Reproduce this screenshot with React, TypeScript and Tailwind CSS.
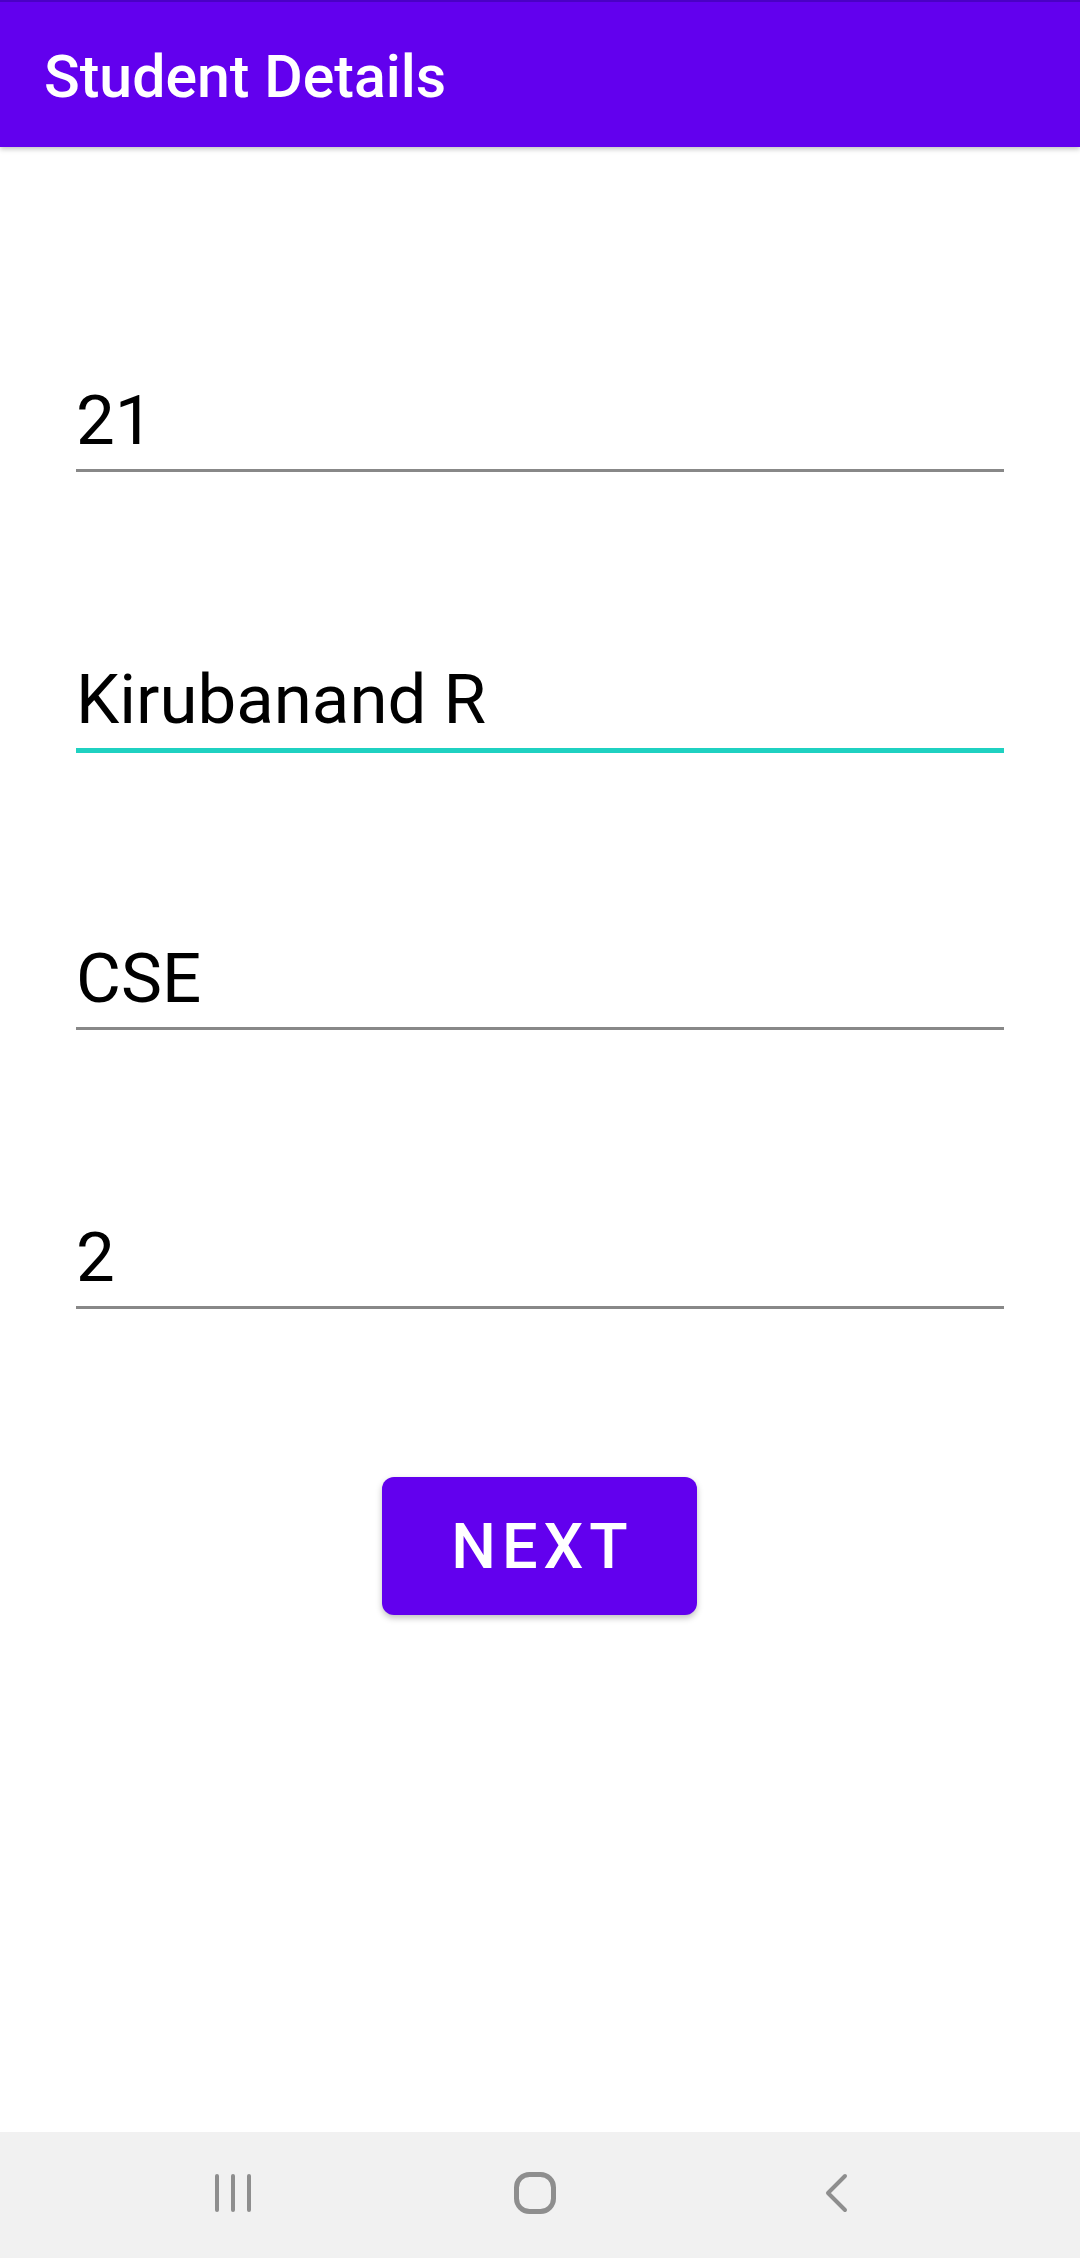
import React from "react";

const font = { fontFamily: "Roboto, 'Noto Sans', sans-serif" };

function Field({ value, active = false }: { value: string; active?: boolean }) {
  return (
    <div
      className={
        "pb-[7px] " +
        (active ? "border-b-[5px] border-[#1fd1c1]" : "border-b-[3px] border-[#888888]")
      }
    >
      <div className="text-[69px] leading-[82px] text-black">{value}</div>
    </div>
  );
}

export default function App() {
  return (
    <div className="flex h-[2258px] w-[1080px] flex-col bg-white" style={font}>
      <header className="relative z-10 flex h-[147px] shrink-0 items-center border-t-2 border-[#4a00c4] bg-[#6200EE] pl-[44px] pt-[4px] shadow-[0_2px_5px_rgba(0,0,0,0.25)]">
        <h1 className="text-[59px] font-medium leading-[69px] text-white">Student Details</h1>
      </header>

      <main className="flex flex-1 flex-col pt-[233px]">
        <div className="mx-[76px] flex flex-col">
          <Field value="21" />
          <div className="mt-[187px]">
            <Field value="Kirubanand R" active />
          </div>
          <div className="mt-[185px]">
            <Field value="CSE" />
          </div>
          <div className="mt-[187px]">
            <Field value="2" />
          </div>
        </div>

        <div className="mt-[168px] flex justify-center pr-[1px]">
          <button className="flex h-[138px] w-[315px] items-center justify-center rounded-[12px] bg-[#6200EE] pl-[6px] pt-[2px] text-[63px] font-medium tracking-[6px] text-white shadow-[0_3px_6px_rgba(0,0,0,0.25)]">
            NEXT
          </button>
        </div>
      </main>

      <nav className="flex h-[126px] shrink-0 items-center gap-[202px] bg-[#f1f1f1] pb-[4px] pl-[183px]">
        <div className="flex w-[100px] items-center justify-center">
          <svg width="48" height="48" viewBox="0 0 48 48" fill="none" stroke="#8e8e8e" strokeWidth="4" strokeLinecap="round">
            <line x1="8" y1="7" x2="8" y2="41" />
            <line x1="24" y1="7" x2="24" y2="41" />
            <line x1="40" y1="7" x2="40" y2="41" />
          </svg>
        </div>
        <div className="flex w-[100px] items-center justify-center">
          <svg width="48" height="48" viewBox="0 0 48 48" fill="none" stroke="#8e8e8e" strokeWidth="5">
            <rect x="5.5" y="5.5" width="37" height="37" rx="13" />
          </svg>
        </div>
        <div className="flex w-[100px] items-center justify-center">
          <svg width="48" height="48" viewBox="0 0 48 48" fill="none" stroke="#8e8e8e" strokeWidth="4" strokeLinecap="round" strokeLinejoin="round">
            <polyline points="32,7 15,24 32,41" />
          </svg>
        </div>
      </nav>
    </div>
  );
}
